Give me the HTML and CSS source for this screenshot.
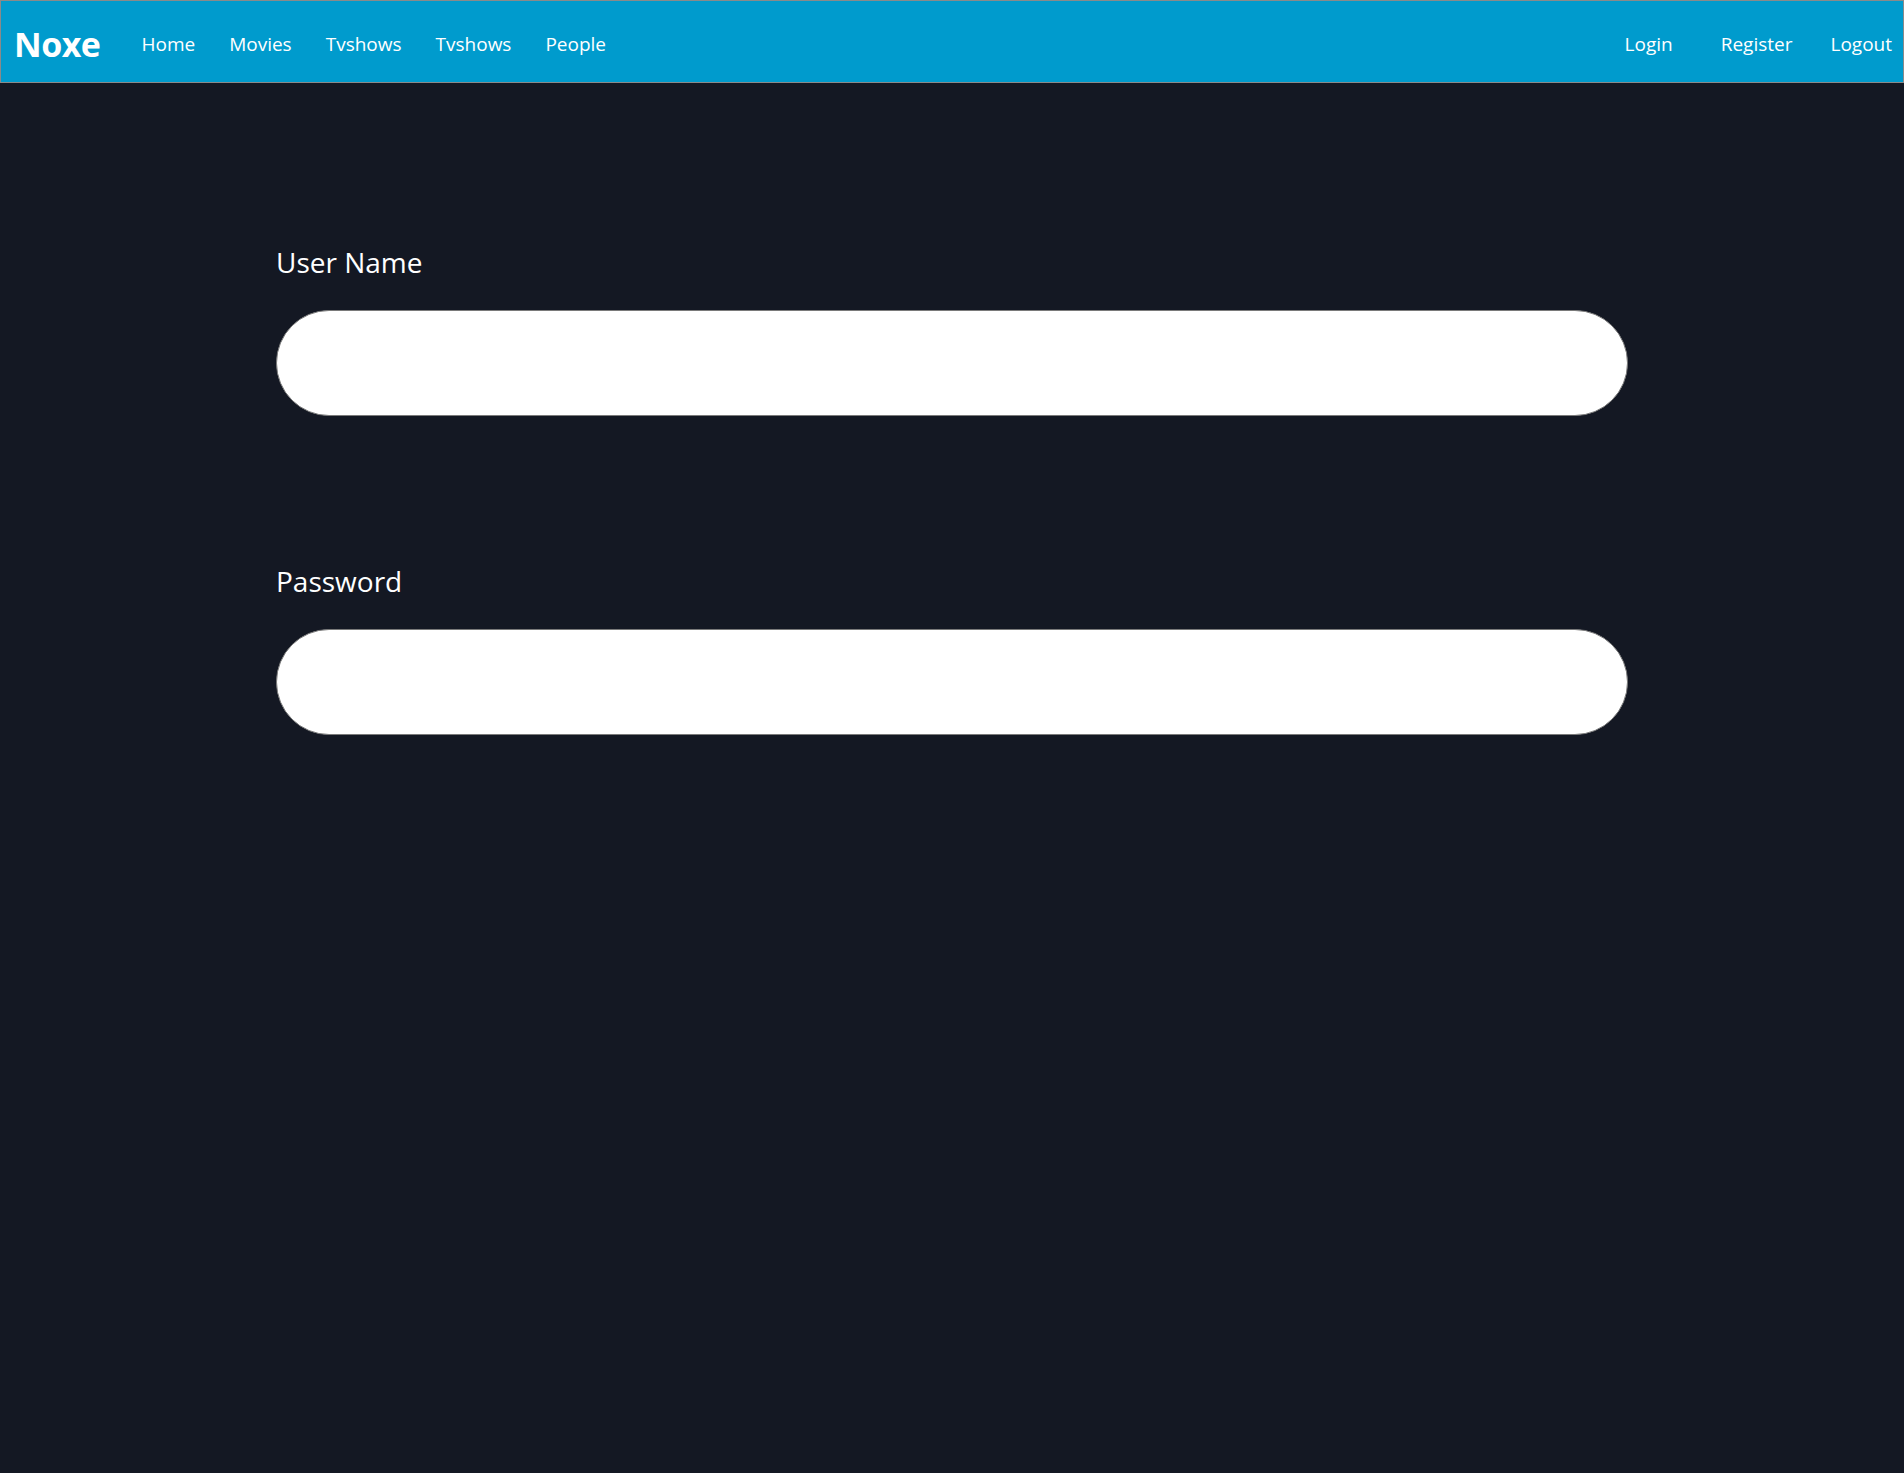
FILE: index.html
```html
<!DOCTYPE html>
<html lang="en">
<head>
<meta charset="utf-8">
<title>Noxe</title>
<link rel="stylesheet" href="styles.css">
</head>
<body>
<nav class="navbar">
  <a class="brand" href="#">Noxe</a>
  <ul class="nav-left">
    <li><a href="#">Home</a></li>
    <li><a href="#">Movies</a></li>
    <li><a href="#">Tvshows</a></li>
    <li><a href="#">Tvshows</a></li>
    <li><a href="#">People</a></li>
  </ul>
  <ul class="nav-right">
    <li class="login"><a href="#">Login</a></li>
    <li class="register"><a href="#">Register</a></li>
    <li><a href="#">Logout</a></li>
  </ul>
</nav>
<main class="container">
  <div class="field">
    <label for="username">User Name</label>
    <input id="username" type="text">
  </div>
  <div class="field">
    <label for="password">Password</label>
    <input id="password" type="password">
  </div>
</main>
</body>
</html>
```
FILE: styles.css
```css
* { box-sizing: border-box; }
html, body { margin: 0; padding: 0; }
body {
  background: #141823;
  color: #fff;
  font-family: "Open Sans", "Noto Sans", sans-serif;
  min-height: 1473px;
}
.navbar {
  display: flex;
  align-items: center;
  height: 83px;
  background: #009bcd;
  border: 1px solid #8a8a8a;
  padding: 4px 11px 0 13px;
}
.brand {
  color: #fff;
  text-decoration: none;
  font-weight: 700;
  font-size: 34px;
  letter-spacing: -0.5px;
  margin-right: 41px;
}
.nav-left, .nav-right {
  list-style: none;
  margin: 0;
  padding: 0;
  display: flex;
  align-items: center;
}
.nav-left { gap: 34px; }
.nav-right { margin-left: auto; }
.nav-right .login { margin-right: 48px; }
.nav-right .register { margin-right: 38px; }
.navbar ul a {
  color: #fff;
  text-decoration: none;
  font-size: 19px;
}
.container {
  width: 1352px;
  margin: 0 auto;
  padding-top: 161px;
}
.field { margin-bottom: 147px; }
.field label {
  display: block;
  font-size: 28px;
  line-height: 36px;
  margin-bottom: 30px;
}
.field input {
  display: block;
  width: 100%;
  height: 106px;
  border: 1px solid #7a7a7a;
  border-radius: 53px;
  background: #fff;
  padding: 0 40px;
  font-size: 24px;
  outline: none;
}
```
